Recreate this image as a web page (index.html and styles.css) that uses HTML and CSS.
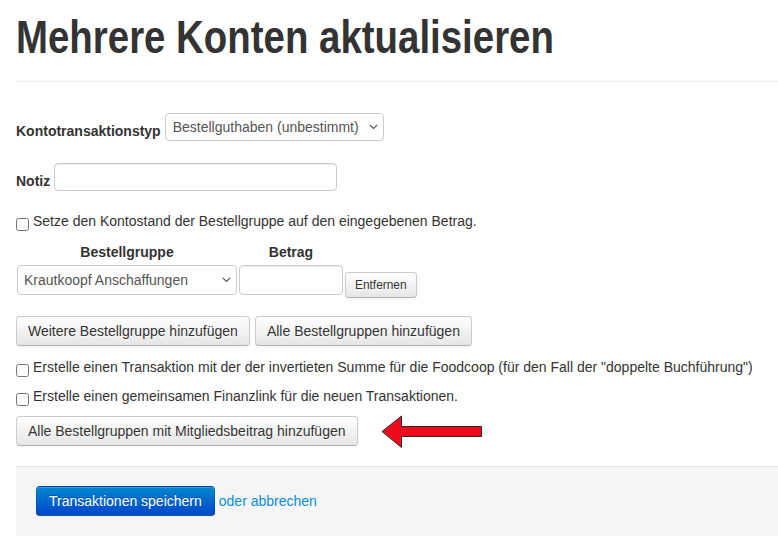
FILE: index.html
```html
<!DOCTYPE html>
<html lang="de">
<head>
<meta charset="utf-8">
<title>Mehrere Konten aktualisieren</title>
<link rel="stylesheet" href="styles.css">
</head>
<body>
<div class="page">
  <div class="page-header">
    <h1 class="title">Mehrere Konten aktualisieren</h1>
  </div>
  <form class="form">
    <div class="field field-type">
      <label class="lbl">Kontotransaktionstyp</label>
      <span class="sel-wrap">
        <select class="sel sel-type"><option>Bestellguthaben (unbestimmt)</option></select>
        <svg class="chev" width="9" height="6" viewBox="0 0 9 6" aria-hidden="true"><polyline points="0.8,0.8 4.5,4.5 8.2,0.8" fill="none" stroke="#555" stroke-width="1.2"/></svg>
      </span>
    </div>
    <div class="field field-note">
      <label class="lbl">Notiz</label>
      <input class="txt txt-note" type="text">
    </div>
    <label class="check check-first"><input type="checkbox" class="cb"><span>Setze den Kontostand der Bestellgruppe auf den eingegebenen Betrag.</span></label>
    <div class="groups">
      <div class="gh">Bestellgruppe</div>
      <div class="gh">Betrag</div>
      <div></div>
      <span class="sel-wrap">
        <select class="sel sel-group"><option>Krautkoopf Anschaffungen</option></select>
        <svg class="chev" width="9" height="6" viewBox="0 0 9 6" aria-hidden="true"><polyline points="0.8,0.8 4.5,4.5 8.2,0.8" fill="none" stroke="#555" stroke-width="1.2"/></svg>
      </span>
      <input class="txt txt-amount" type="text">
      <div><button type="button" class="btn btn-small">Entfernen</button></div>
    </div>
    <div class="btn-row">
      <button type="button" class="btn">Weitere Bestellgruppe hinzufügen</button>
      <button type="button" class="btn">Alle Bestellgruppen hinzufügen</button>
    </div>
    <label class="check check-second"><input type="checkbox" class="cb"><span>Erstelle einen Transaktion mit der der invertieten Summe für die Foodcoop (für den Fall der "doppelte Buchführung")</span></label>
    <label class="check check-third"><input type="checkbox" class="cb"><span>Erstelle einen gemeinsamen Finanzlink für die neuen Transaktionen.</span></label>
    <div class="btn-row btn-row-fee">
      <button type="button" class="btn">Alle Bestellgruppen mit Mitgliedsbeitrag hinzufügen</button>
      <svg class="arrow" width="102" height="34" viewBox="0 0 102 34" aria-hidden="true">
        <polygon points="1,16.5 20.5,1 20.5,11.5 100.5,11.5 100.5,21.5 20.5,21.5 20.5,32.5" fill="#ee0a1c" stroke="#2b2b2b" stroke-width="1" stroke-linejoin="miter"/>
      </svg>
    </div>
    <div class="form-actions">
      <button type="button" class="btn btn-primary">Transaktionen speichern</button>
      <a class="cancel" href="#">oder abbrechen</a>
    </div>
  </form>
</div>
</body>
</html>
```
FILE: styles.css
```css
* { box-sizing: border-box; }

html, body {
  margin: 0;
  padding: 0;
  background: #fff;
  overflow: hidden;
}

body {
  font-family: "Liberation Sans", Arial, sans-serif;
  font-size: 14px;
  line-height: 20px;
  color: #333;
}

.page {
  padding-left: 16px;
}

.page-header {
  border-bottom: 1px solid #eee;
  padding-bottom: 19px;
}

.title {
  margin: 0;
  padding-top: 12px;
  font-family: "Liberation Sans", Arial, sans-serif;
  font-weight: bold;
  font-size: 46px;
  line-height: 50px;
  color: #333;
  white-space: nowrap;
  transform: scaleX(0.835);
  transform-origin: left center;
}

.form {
  padding-top: 31px;
}

.field {
  display: flex;
  align-items: flex-end;
  gap: 4px;
}

.field-note {
  margin-top: 22px;
}

.lbl {
  font-weight: bold;
  line-height: 20px;
}

.sel-wrap {
  position: relative;
  display: block;
}

.sel {
  display: block;
  -webkit-appearance: none;
  appearance: none;
  font-family: "Liberation Sans", Arial, sans-serif;
  font-size: 14px;
  color: #555;
  background-color: #fff;
  border: 1px solid #ccc;
  border-radius: 4px;
  padding: 3px 20px 3px 7px;
  margin: 0;
  line-height: 20px;
}

.chev {
  position: absolute;
  top: 50%;
  right: 6px;
  margin-top: -3px;
  pointer-events: none;
}

.sel-type {
  width: 219px;
  height: 28px;
}

.sel-group {
  width: 220px;
  height: 30px;
  padding-left: 6px;
}

.sel-group + .chev {
  right: 6px;
}

.txt {
  font-family: "Liberation Sans", Arial, sans-serif;
  font-size: 14px;
  color: #555;
  background: #fff;
  border: 1px solid #ccc;
  border-radius: 4px;
  box-shadow: inset 0 1px 1px rgba(0, 0, 0, 0.075);
  padding: 4px 6px;
  margin: 0;
}

.txt-note {
  width: 283px;
  height: 28px;
}

.check {
  display: flex;
  align-items: flex-start;
  line-height: 20px;
}

.cb {
  width: 13px;
  height: 13px;
  margin: 7px 4px 0 0;
  flex: none;
}

.check-first {
  margin-top: 20px;
}

.check-second {
  margin-top: 11px;
}

.check-third {
  margin-top: 9px;
}

.groups {
  display: grid;
  grid-template-columns: 220px 104px auto;
  column-gap: 2px;
  row-gap: 3px;
  margin-top: 11px;
  margin-left: 1px;
  align-items: start;
}

.gh {
  font-weight: bold;
  text-align: center;
  line-height: 20px;
}

.txt-amount {
  width: 104px;
  height: 30px;
}

.btn {
  display: inline-block;
  font-family: "Liberation Sans", Arial, sans-serif;
  font-size: 14px;
  line-height: 20px;
  color: #333;
  padding: 4px 11px;
  margin: 0;
  background-color: #f5f5f5;
  background-image: linear-gradient(to bottom, #ffffff, #e6e6e6);
  border: 1px solid #ccc;
  border-bottom-color: #b3b3b3;
  border-radius: 4px;
  box-shadow: inset 0 1px 0 rgba(255, 255, 255, 0.2), 0 1px 2px rgba(0, 0, 0, 0.05);
  text-shadow: 0 1px 1px rgba(255, 255, 255, 0.75);
  cursor: pointer;
}

.btn-small {
  font-size: 11.9px;
  padding: 2px 9px;
  margin-top: 7px;
}

.btn-row {
  display: flex;
  align-items: flex-start;
  gap: 5px;
  margin-top: 18px;
}

.btn-row-fee {
  margin-top: 10px;
  gap: 23px;
}

.arrow {
  display: block;
  flex: none;
  margin: -1px 0 -3px;
}

.form-actions {
  margin-top: 20px;
  padding: 19px 20px 20px;
  background: #f5f5f5;
  border-top: 1px solid #e5e5e5;
  display: flex;
  align-items: center;
  gap: 4px;
}

.btn-primary {
  padding: 4px 12px;
  color: #fff;
  text-shadow: 0 -1px 0 rgba(0, 0, 0, 0.25);
  background-color: #006dcc;
  background-image: linear-gradient(to bottom, #0088cc, #0044cc);
  border-color: rgba(0, 0, 0, 0.1) rgba(0, 0, 0, 0.1) rgba(0, 0, 0, 0.25);
}

.cancel {
  color: #0a8fd8;
  text-decoration: none;
}
```
